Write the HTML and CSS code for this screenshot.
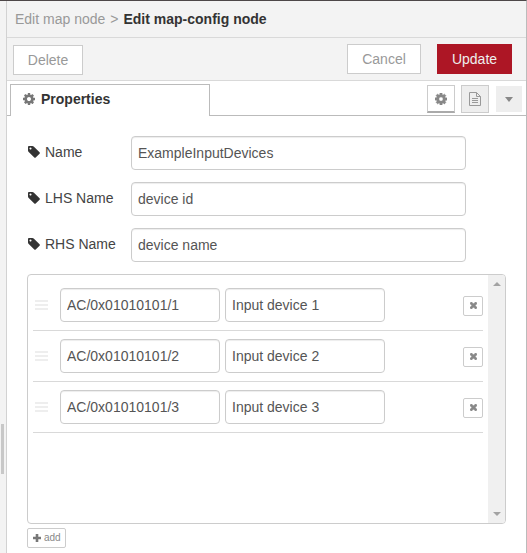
FILE: index.html
```html
<!DOCTYPE html>
<html lang="en">
<head>
<meta charset="utf-8">
<title>Edit map-config node</title>
<link rel="stylesheet" href="styles.css">
</head>
<body>
<svg class="defs" aria-hidden="true">
  <symbol id="cog" viewBox="0 128 1536 1536"><path d="M1024 896q0-106-75-181t-181-75-181 75-75 181 75 181 181 75 181-75 75-181zm512-109v222q0 12-8 23t-20 13l-185 28q-19 54-39 91 35 50 107 138 10 12 10 25t-9 23q-27 37-99 108t-94 71q-12 0-26-9l-138-108q-44 23-91 38-16 136-29 186-7 28-36 28h-222q-14 0-24.5-8.5t-11.5-21.5l-28-184q-49-16-90-37l-141 107q-10 9-25 9-14 0-25-11-126-114-165-168-7-10-7-23 0-12 8-23 15-21 51-66.5t54-70.5q-27-50-41-99l-183-27q-13-2-21-12.5t-8-23.5v-222q0-12 8-23t19-13l186-28q14-46 39-92-40-57-107-138-10-12-10-24 0-10 9-23 26-36 98.5-107.5t94.5-71.5q13 0 26 10l138 107q44-23 91-38 16-136 29-186 7-28 36-28h222q14 0 24.5 8.5t11.5 21.5l28 184q49 16 90 37l142-107q9-9 24-9 13 0 25 10 129 119 165 170 7 8 7 22 0 12-8 23-15 21-51 66.5t-54 70.5q26 50 41 98l183 28q13 2 21 12.5t8 23.5z"/></symbol>
  <symbol id="tag" viewBox="0 128 1536 1536"><path d="M448 448q0-53-37.5-90.5t-90.5-37.5-90.5 37.5-37.5 90.5 37.5 90.5 90.5 37.5 90.5-37.5 37.5-90.5zm1067 576q0 53-37 90l-491 492q-39 37-91 37-53 0-90-37l-715-716q-38-37-64.5-101t-26.5-117v-416q0-52 38-90t90-38h416q53 0 117 26.5t102 64.5l715 714q37 39 37 91z"/></symbol>
  <symbol id="times" viewBox="110 366 1188 1188"><path d="M1298 1322q0 40-28 68l-136 136q-28 28-68 28t-68-28l-294-294-294 294q-28 28-68 28t-68-28l-136-136q-28-28-28-68t28-68l294-294-294-294q-28-28-28-68t28-68l136-136q28-28 68-28t68 28l294 294 294-294q28-28 68-28t68 28l136 136q28 28 28 68t-28 68l-294 294 294 294q28 28 28 68z"/></symbol>
</svg>
<div class="tray">
  <div class="gutter"><span class="grip"></span></div>
  <main class="panel">
    <header class="crumbs"><span>Edit map node</span><span class="sep">&gt;</span><b>Edit map-config node</b></header>
    <div class="toolbar">
      <button class="btn delete">Delete</button>
      <button class="btn cancel">Cancel</button>
      <button class="btn update">Update</button>
    </div>
    <nav class="tabs">
      <div class="tab"><svg class="icon"><use href="#cog"/></svg>Properties</div>
      <div class="tools">
        <button class="tool selected" aria-label="Properties"><svg class="icon"><use href="#cog"/></svg></button>
        <button class="tool" aria-label="Description"><svg class="doc" viewBox="0 0 12 14"><path d="M.5.5h7l4 4v9H.5zM7.5.5v4h4M3 6.5h6M3 8.5h6M3 10.5h6"/></svg></button>
        <button class="tool menu" aria-label="More"><span class="caret"></span></button>
      </div>
    </nav>
    <form class="form">
      <div class="field"><label><svg class="icon"><use href="#tag"/></svg>Name</label><input value="ExampleInputDevices"></div>
      <div class="field"><label><svg class="icon"><use href="#tag"/></svg>LHS Name</label><input value="device id"></div>
      <div class="field"><label><svg class="icon"><use href="#tag"/></svg>RHS Name</label><input value="device name"></div>
      <div class="list">
        <div class="items">
          <div class="item"><span class="handle"><i></i><i></i><i></i></span><input value="AC/0x01010101/1"><input value="Input device 1"><button type="button" class="remove" aria-label="Remove"><svg><use href="#times"/></svg></button></div>
          <div class="item"><span class="handle"><i></i><i></i><i></i></span><input value="AC/0x01010101/2"><input value="Input device 2"><button type="button" class="remove" aria-label="Remove"><svg><use href="#times"/></svg></button></div>
          <div class="item"><span class="handle"><i></i><i></i><i></i></span><input value="AC/0x01010101/3"><input value="Input device 3"><button type="button" class="remove" aria-label="Remove"><svg><use href="#times"/></svg></button></div>
        </div>
        <div class="scrollbar"><span class="up"></span><span class="down"></span></div>
      </div>
      <button type="button" class="add"><svg viewBox="0 0 8 8"><path d="M4 0v8M0 4h8"/></svg>add</button>
    </form>
  </main>
</div>
</body>
</html>
```

FILE: styles.css
```css
* { box-sizing: border-box; }
body {
  margin: 0;
  font: 14px/20px "Liberation Sans", Arial, sans-serif;
  color: #444;
  background: #fff;
}
button, input { font: inherit; margin: 0; }
svg { display: block; flex: none; fill: currentColor; }
.defs { display: none; }
.icon { width: 12px; height: 12px; }

.tray {
  display: flex;
  height: 553px;
  overflow: hidden;
  border-top: 1px solid #4d4748;
  border-right: 1px solid #bbb;
}
.gutter {
  width: 7px;
  flex: none;
  padding: 423px 0 0 1px;
  background: #f3f3f3;
  border-right: 1px solid #d2d2d2;
}
.grip { display: block; width: 3px; height: 50px; background: #c8c8c8; }
.panel { flex: 1; min-width: 0; }

.crumbs {
  display: flex;
  height: 37px;
  padding: 8px 8px 0;
  background: #f3f3f3;
  border-bottom: 1px solid #d9d9d9;
  color: #999;
}
.crumbs .sep { margin: 0 5px; }
.crumbs b { color: #333; }

.toolbar {
  display: flex;
  height: 43px;
  padding: 6px 14px 0 6px;
  background: #f3f3f3;
  border-bottom: 1px solid #d9d9d9;
}
.btn {
  height: 30px;
  padding: 0;
  border: 1px solid #ccc;
  background: #fff;
  color: #999;
}
.delete { width: 70px; margin: 1px auto 0 0; }
.cancel { width: 74px; margin-right: 16px; }
.update { width: 75px; background: #ad1625; border-color: #ad1625; color: #eee; }

.tabs {
  display: flex;
  height: 35px;
  padding: 3px 4px 0 3px;
  box-shadow: inset 0 -1px #bbb;
}
.tab {
  display: flex;
  align-items: center;
  gap: 6px;
  width: 200px;
  height: 32px;
  padding: 0 12px 3px;
  border: 1px solid #bbb;
  border-bottom: 0;
  background: #fff;
  font-weight: bold;
  color: #333;
}
.tab .icon { color: #777; }
.tools { display: flex; gap: 6px; margin: 1px 0 0 auto; }
.tool {
  display: flex;
  align-items: center;
  justify-content: center;
  width: 28px;
  height: 28px;
  padding: 0;
  border: 1px solid #ccc;
  background: #eee;
  color: #888;
}
.tool .icon { stroke: currentColor; stroke-width: 50; }
.selected { background: #fff; border-bottom: 2px solid #aaa; }
.doc { width: 12px; height: 14px; fill: none; stroke: #999; }
.menu { width: 26px; height: 26px; margin: 1px 0 0 1px; border: 0; }
.caret { border: 4px solid transparent; border-top: 5px solid #888; border-bottom: 0; }

.form { padding: 20px 20px 0; }
.field { display: flex; margin-bottom: 12px; }
.field label {
  display: flex;
  gap: 5px;
  width: 104px;
  padding: 6px 0 0 1px;
  color: #444;
}
.field .icon { margin-top: 4px; color: #333; }
input {
  width: 335px;
  height: 34px;
  padding: 0 6px;
  border: 1px solid #ccc;
  border-radius: 4px;
  background: #fff;
  box-shadow: inset 0 1px 1px rgba(0, 0, 0, .075);
  color: #555;
}

.list {
  display: flex;
  width: 479px;
  height: 250px;
  border: 1px solid #ccc;
  border-radius: 4px;
  overflow: hidden;
}
.items { flex: 1; padding: 5px 5px 0; }
.item {
  display: flex;
  align-items: center;
  height: 51px;
  border-bottom: 1px solid #d9d9d9;
}
.item input { width: 160px; margin-right: 5px; }
.handle { display: flex; flex-direction: column; gap: 2px; width: 13px; margin: 0 12px 0 2px; }
.handle i { height: 2px; background: #eee; }
.remove {
  width: 20px;
  height: 20px;
  margin: 2px 0 0 auto;
  padding: 0 0 1px 6px;
  border: 1px solid #ccc;
  border-radius: 2px;
  background: #fff;
  color: #888;
}
.remove svg { width: 7px; height: 7px; stroke: currentColor; stroke-width: 110; }
.scrollbar {
  display: flex;
  flex-direction: column;
  justify-content: space-between;
  align-items: center;
  width: 17px;
  padding: 7px 0;
  background: #f0f0f0;
}
.up, .down { border: 4px solid transparent; }
.up { border-top: 0; border-bottom-color: #a3a3a3; }
.down { border-bottom: 0; border-top-color: #a3a3a3; }
.add {
  display: flex;
  align-items: center;
  gap: 3px;
  width: 39px;
  height: 20px;
  margin-top: 4px;
  padding: 0 0 1px 5px;
  border: 1px solid #ccc;
  border-radius: 2px;
  background: #fff;
  color: #888;
  font-size: 10px;
  line-height: 14px;
  white-space: nowrap;
}
.add svg { width: 8px; height: 8px; stroke: #777; stroke-width: 2.6; }
```
